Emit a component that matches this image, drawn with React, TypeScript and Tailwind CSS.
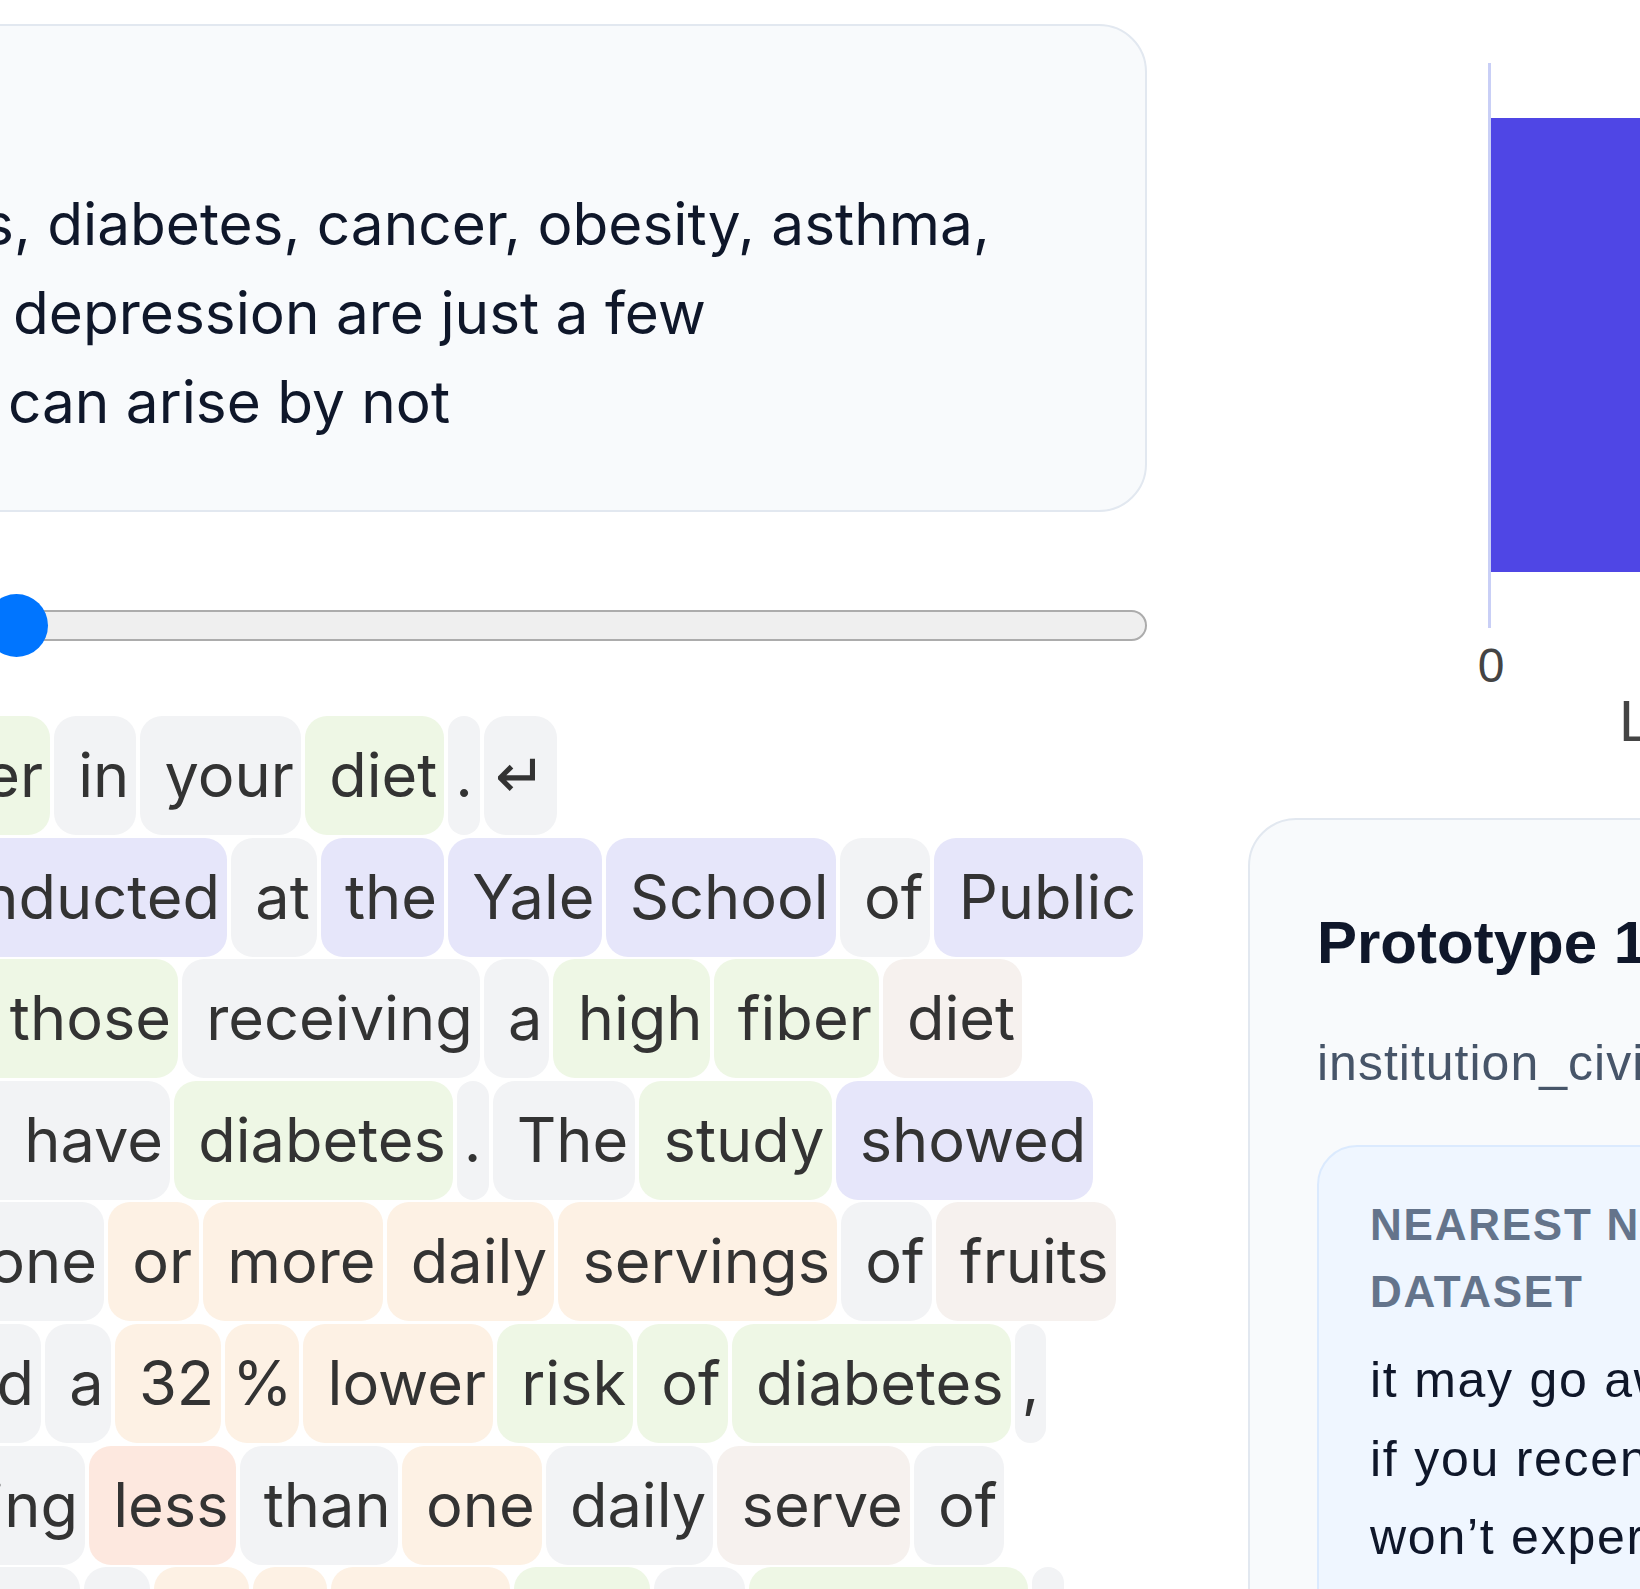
import clsx from "clsx";

/**
 * Prototype inspector: an excerpt card, the position slider, the tokenised
 * passage (one tinted pill per token), the score bar and the prototype card
 * with its nearest-neighbour example.
 */

type Tone = "gray" | "green" | "violet" | "peach" | "sand" | "rose";

const TONE: Record<Tone, string> = {
  gray: "bg-[#f2f3f5]",
  green: "bg-[#eef7e5]",
  violet: "bg-[#e6e6fa]",
  peach: "bg-[#fdf1e4]",
  sand: "bg-[#f6f1ee]",
  rose: "bg-[#fde8df]",
};

type Tok = { text: string; tone: Tone; glyph?: boolean };
type Row = { edge: number; lead: Tok; tokens: Tok[] };

const t = (text: string, tone: Tone, glyph = false): Tok => ({ text, tone, glyph });

// `edge` is where the row's first (carried-over) pill ends; the rest follow it.
const ROWS: Row[] = [
  {
    edge: 50,
    lead: t(" fiber", "green"),
    tokens: [t(" in", "gray"), t(" your", "gray"), t(" diet", "green"), t(".", "gray"), t("↵", "gray", true)],
  },
  {
    edge: 227,
    lead: t(" conducted", "violet"),
    tokens: [
      t(" at", "gray"),
      t(" the", "violet"),
      t(" Yale", "violet"),
      t(" School", "violet"),
      t(" of", "gray"),
      t(" Public", "violet"),
    ],
  },
  {
    edge: 178,
    lead: t(" those", "green"),
    tokens: [t(" receiving", "gray"), t(" a", "gray"), t(" high", "green"), t(" fiber", "green"), t(" diet", "sand")],
  },
  {
    edge: 170,
    lead: t(" have", "gray"),
    tokens: [t(" diabetes", "green"), t(".", "gray"), t(" The", "gray"), t(" study", "green"), t(" showed", "violet")],
  },
  {
    edge: 104,
    lead: t(" one", "gray"),
    tokens: [
      t(" or", "peach"),
      t(" more", "peach"),
      t(" daily", "peach"),
      t(" servings", "peach"),
      t(" of", "gray"),
      t(" fruits", "sand"),
    ],
  },
  {
    edge: 41,
    lead: t(" had", "gray"),
    tokens: [
      t(" a", "gray"),
      t(" 32", "peach"),
      t("%", "peach"),
      t(" lower", "peach"),
      t(" risk", "green"),
      t(" of", "green"),
      t(" diabetes", "green"),
      t(",", "gray"),
    ],
  },
  {
    edge: 85,
    lead: t(" consuming", "gray"),
    tokens: [
      t(" less", "rose"),
      t(" than", "gray"),
      t(" one", "peach"),
      t(" daily", "gray"),
      t(" serve", "sand"),
      t(" of", "gray"),
    ],
  },
  {
    edge: 80,
    lead: t(" fruits", "gray"),
    tokens: [
      t(" a", "gray"),
      t(" 10", "peach"),
      t("%", "peach"),
      t(" more", "peach"),
      t(" risk", "green"),
      t(" of", "gray"),
      t(" diabetes", "green"),
      t(".", "gray"),
    ],
  },
];

const LEAD_W = 520;

function Pill({ tok, className }: { tok: Tok; className?: string }) {
  return (
    <span
      className={clsx(
        "box-border h-[119px] shrink-0 whitespace-pre rounded-[22px] leading-[119px]",
        // the newline marker is drawn with a thinner arrow face
        tok.glyph ? "px-[11px] font-['DejaVu_Sans',sans-serif] font-light" : "px-[7px]",
        TONE[tok.tone],
        className,
      )}
    >
      {tok.text}
    </span>
  );
}

function TokenRow({ row }: { row: Row }) {
  return (
    <div className="flex shrink-0 gap-[4px]" style={{ marginLeft: row.edge - LEAD_W }}>
      <Pill tok={row.lead} className="w-[520px] text-right" />
      {row.tokens.map((tok, i) => (
        <Pill key={i} tok={tok} />
      ))}
    </div>
  );
}

function ExcerptCard() {
  return (
    <div className="ml-[-80px] mt-[24px] h-[488px] shrink-0 rounded-[48px] border-2 border-[#e2e8f0] bg-[#f8fafc] pt-[153px] font-['Inter',sans-serif] text-[58.5px] leading-[89px] text-[#0f172a]">
      <p className="whitespace-nowrap pl-[61px]">s, diabetes, cancer, obesity, asthma,</p>
      <p className="whitespace-nowrap pl-[91px]">depression are just a few</p>
      <p className="whitespace-nowrap pl-[86px]">can arise by not</p>
    </div>
  );
}

function PositionSlider() {
  return (
    <div className="relative mt-[82px] h-[63px] shrink-0">
      <div className="ml-[-40px] mt-[16px] h-[31px] rounded-full border-2 border-[#acacac] bg-[#efefef]" />
      <div className="absolute left-[-15px] top-0 h-[63px] w-[63px] rounded-full bg-[#0075ff]" />
    </div>
  );
}

function ScoreChart() {
  return (
    <svg width="493" height="790" className="block shrink-0 overflow-visible">
      <line x1="342.5" y1="63" x2="342.5" y2="628" stroke="#c9cff6" strokeWidth="3" />
      <rect x="344" y="118" width="220" height="454" fill="#4f46e5" />
      <text
        x="344"
        y="682"
        textAnchor="middle"
        fontSize="48"
        fill="#444444"
        fontFamily="'Liberation Sans', Arial, sans-serif"
      >
        0
      </text>
      <text x="472" y="741" fontSize="58" fill="#444444" fontFamily="'Liberation Sans', Arial, sans-serif">
        Likelihood
      </text>
    </svg>
  );
}

function PrototypeCard() {
  return (
    <div className="ml-[101px] mt-[28px] h-[900px] w-[720px] shrink-0 rounded-[48px] border-2 border-[#e2e8f0] bg-[#f8fafc] pl-[67px] pt-[85px] font-['Liberation_Sans',Arial,sans-serif]">
      <h3 className="whitespace-nowrap text-[60px] font-bold leading-[75px] text-[#0f172a]">Prototype 1</h3>
      <div className="mt-[46px] whitespace-nowrap text-[50px] leading-[75px] tracking-[0.02em] text-[#475569]">
        institution_civil_society
      </div>
      <div className="mt-[44px] h-[600px] rounded-[40px] border-2 border-[#dbeafe] bg-[#eff6ff] pl-[51px] pt-[44px]">
        <div className="whitespace-nowrap text-[44px] font-bold uppercase leading-[67px] tracking-[0.04em] text-[#64748b]">
          Nearest neighbor in
          <br />
          dataset
        </div>
        <p className="mt-[16px] whitespace-nowrap text-[50px] leading-[78.5px] tracking-[0.035em] text-[#0f172a]">
          it may go away on its own, especially
          <br />
          if you recently changed your diet. You
          <br />
          won’t experience any lasting harm.
        </p>
      </div>
    </div>
  );
}

export default function App() {
  return (
    <div className="flex h-[1589px] w-[1640px] overflow-hidden bg-white">
      <div className="flex w-[1147px] shrink-0 flex-col">
        <ExcerptCard />
        <PositionSlider />
        <div className="mt-[59px] flex shrink-0 flex-col gap-[2.6px] font-['Inter',sans-serif] text-[61.3px] text-[#333333]">
          {ROWS.map((row, i) => (
            <TokenRow key={i} row={row} />
          ))}
        </div>
      </div>
      <div className="flex min-w-0 flex-1 flex-col">
        <ScoreChart />
        <PrototypeCard />
      </div>
    </div>
  );
}
